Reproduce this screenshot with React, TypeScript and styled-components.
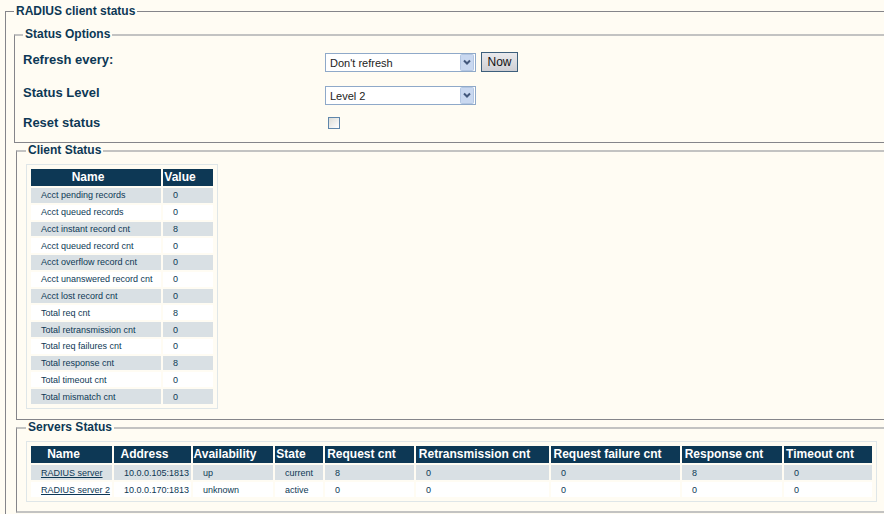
import React from 'react';
import styled, { createGlobalStyle } from 'styled-components';

const navy = '#0d3855';

const GlobalStyle = createGlobalStyle`
  * { box-sizing: border-box; }
  body {
    margin: 0;
    background: #fffcf3;
    color: ${navy};
    font: 12px/14px "Liberation Sans", Arial, sans-serif;
    overflow: hidden;
  }
`;

const Page = styled.main`
  padding: 4px 0 0 5px;
`;

const Group = styled.fieldset<{ $pad: string; $indent?: number }>`
  min-width: 0;
  margin: 0 0 0 ${(p) => p.$indent ?? 0}px;
  padding: ${(p) => p.$pad};
  border: 1px solid #85858a;
  border-right: 0;
`;

const Outer = styled(Group)`
  min-height: 520px;
`;

const Panel = styled(Group)<{ $softBase?: boolean }>`
  border-top: 2px solid #c3c3c2;
  border-bottom: ${(p) => (p.$softBase ? '2px solid #c3c3c2' : '1px solid #85858a')};
`;

const Legend = styled.legend`
  padding: 0 2px;
  font-size: 12px;
  font-weight: bold;
  line-height: 15px;
`;

const Options = styled.div`
  display: grid;
  grid-template-columns: 302px 1fr;
  grid-template-rows: 33px 30px 28px;
`;

const Label = styled.label`
  font-size: 13px;
  font-weight: bold;
  line-height: 17px;
`;

const Controls = styled.div`
  display: flex;
  align-items: flex-start;
  gap: 5px;
`;

const SelectBox = styled.span`
  display: grid;
  width: 151px;
  height: 19px;
  margin-top: 2px;
  align-items: center;
  justify-items: end;
  background: #fff;
  border: 1px solid #8fa9c9;
  > * { grid-area: 1 / 1; }
`;

const Select = styled.select`
  appearance: none;
  width: 100%;
  height: 100%;
  padding: 0 20px 0 4px;
  border: 0;
  background: transparent;
  color: #222;
  font: 11px "Liberation Sans", Arial, sans-serif;
`;

const Arrow = styled.svg`
  width: 15px;
  height: 17px;
  pointer-events: none;
`;

const Button = styled.button`
  width: 37px;
  height: 20px;
  margin-top: 1px;
  padding: 0;
  border: 1px solid #3d5f7c;
  background: linear-gradient(#e9e9ec, #cfcfd4);
  color: #111;
  font: 12px "Liberation Sans", Arial, sans-serif;
`;

const Check = styled.input`
  appearance: none;
  width: 12px;
  height: 12px;
  margin: 3px 0 0 3px;
  border: 1px solid #5f86ab;
  background: linear-gradient(135deg, #dcdcd7, #fff);
  &:checked { background: #5f86ab; }
`;

const Table = styled.table<{ $height: number }>`
  table-layout: fixed;
  width: 1px;
  height: ${(p) => p.$height}px;
  padding: 2px;
  border: 1px solid #dfe6e8;
  border-collapse: separate;
  border-spacing: 2px;
`;

const Col = styled.col<{ $w: number }>`
  width: ${(p) => p.$w}px;
`;

const Head = styled.th`
  height: 17px;
  padding: 0 16px 0 0;
  background: ${navy};
  color: #fff;
  font-size: 12px;
  line-height: 17px;
  white-space: nowrap;
`;

const Row = styled.tr`
  background: #fff;
  &:nth-child(odd) { background: #d9e0e4; }
`;

const Cell = styled.td`
  padding: 0 0 0 10px;
  font-size: 9px;
  line-height: 14px;
  white-space: nowrap;
`;

const ServerLink = styled.a`
  color: inherit;
`;

const counters: [string, number][] = [
  ['Acct pending records', 0],
  ['Acct queued records', 0],
  ['Acct instant record cnt', 8],
  ['Acct queued record cnt', 0],
  ['Acct overflow record cnt', 0],
  ['Acct unanswered record cnt', 0],
  ['Acct lost record cnt', 0],
  ['Total req cnt', 8],
  ['Total retransmission cnt', 0],
  ['Total req failures cnt', 0],
  ['Total response cnt', 8],
  ['Total timeout cnt', 0],
  ['Total mismatch cnt', 0],
];

const serverColumns: [string, number][] = [
  ['Name', 81],
  ['Address', 77],
  ['Availability', 80],
  ['State', 48],
  ['Request cnt', 89],
  ['Retransmission cnt', 133],
  ['Request failure cnt', 129],
  ['Response cnt', 100],
  ['Timeout cnt', 88],
];

const servers = [
  ['RADIUS server', '10.0.0.105:1813', 'up', 'current', '8', '0', '0', '8', '0'],
  ['RADIUS server 2', '10.0.0.170:1813', 'unknown', 'active', '0', '0', '0', '0', '0'],
];

function DropDown({ id, options }: { id: string; options: string[] }) {
  return (
    <SelectBox>
      <Select id={id}>
        {options.map((o) => (
          <option key={o}>{o}</option>
        ))}
      </Select>
      <Arrow viewBox="0 0 15 17" aria-hidden="true">
        <rect x="0.5" y="0.5" width="13" height="16" rx="1" fill="#c9d8f0" stroke="#b3c6e2" />
        <path d="M4 6.5l3 3 3-3" fill="none" stroke="#43587c" strokeWidth="2" />
      </Arrow>
    </SelectBox>
  );
}

export default function App() {
  return (
    <>
      <GlobalStyle />
      <Page>
        <Outer $pad="8px 0 0 8px">
          <Legend>RADIUS client status</Legend>
          <Panel $pad="9px 0 0 8px">
            <Legend>Status Options</Legend>
            <Options>
              <Label htmlFor="refresh">Refresh every:</Label>
              <Controls>
                <DropDown id="refresh" options={["Don't refresh", 'Every 5 seconds', 'Every 30 seconds']} />
                <Button type="button">Now</Button>
              </Controls>
              <Label htmlFor="level">Status Level</Label>
              <Controls>
                <DropDown id="level" options={['Level 2', 'Level 1']} />
              </Controls>
              <Label htmlFor="reset">Reset status</Label>
              <Controls>
                <Check id="reset" type="checkbox" />
              </Controls>
            </Options>
          </Panel>
          <Panel $pad="6px 0 10px 9px" $indent={2}>
            <Legend>Client Status</Legend>
            <Table $height={245}>
              <colgroup>
                <Col $w={130} />
                <Col $w={50} />
              </colgroup>
              <thead>
                <tr>
                  <Head scope="col">Name</Head>
                  <Head scope="col">Value</Head>
                </tr>
              </thead>
              <tbody>
                {counters.map(([name, value]) => (
                  <Row key={name}>
                    <Cell>{name}</Cell>
                    <Cell>{value}</Cell>
                  </Row>
                ))}
              </tbody>
            </Table>
          </Panel>
          <Panel $pad="6px 0 9px 9px" $indent={2} $softBase>
            <Legend>Servers Status</Legend>
            <Table $height={61}>
              <colgroup>
                {serverColumns.map(([name, w]) => (
                  <Col key={name} $w={w} />
                ))}
              </colgroup>
              <thead>
                <tr>
                  {serverColumns.map(([name]) => (
                    <Head key={name} scope="col">{name}</Head>
                  ))}
                </tr>
              </thead>
              <tbody>
                {servers.map(([name, ...values]) => (
                  <Row key={name}>
                    <Cell>
                      <ServerLink href="#">{name}</ServerLink>
                    </Cell>
                    {values.map((v, i) => (
                      <Cell key={i}>{v}</Cell>
                    ))}
                  </Row>
                ))}
              </tbody>
            </Table>
          </Panel>
        </Outer>
      </Page>
    </>
  );
}
